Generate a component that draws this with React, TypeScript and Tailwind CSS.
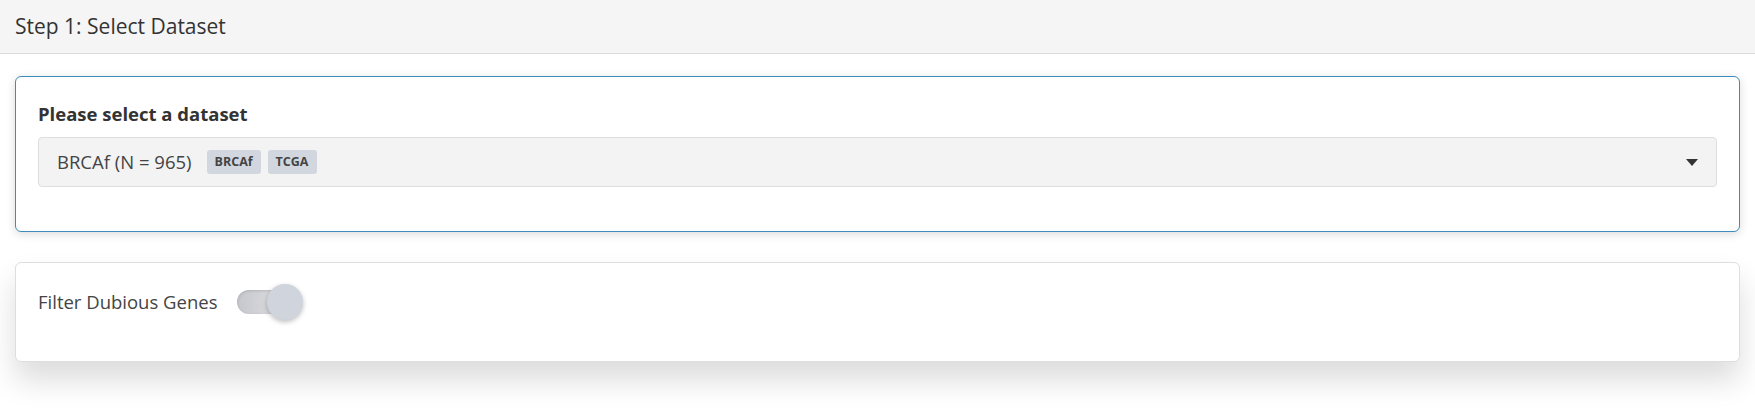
const App = () => {
  return (
    <div className="min-h-[412px] bg-white font-['Open_Sans',sans-serif] text-[#333]">
      <div className="h-[54px] bg-[#f5f5f5] border-b border-[#dcdcdc] flex items-center px-[15px]">
        <h1 className="text-[21px] text-[#333]">Step 1: Select Dataset</h1>
      </div>
      <div className="px-[15px] pt-[22px] flex flex-col gap-[30px]">
        <div className="h-[156px] border border-[#3c8dbc] rounded-[6px] bg-white shadow-[0_2px_10px_rgba(0,0,0,0.15)] px-[22px] pt-[23px]">
          <p className="text-[18.5px] font-bold text-[#333] leading-[28px]">Please select a dataset</p>
          <div className="mt-[9px] h-[50px] bg-[#f3f3f3] border border-[#dedede] rounded-[4px] flex items-center pl-[18px] pr-[18px]">
            <span className="text-[18.5px] text-[#444]">BRCAf (N = 965)</span>
            <span className="ml-[15px] h-[24px] px-[8px] rounded-[3px] bg-[#d2d6de] text-[12.5px] font-bold text-[#444] flex items-center">BRCAf</span>
            <span className="ml-[7px] h-[24px] px-[8px] rounded-[3px] bg-[#d2d6de] text-[12.5px] font-bold text-[#444] flex items-center">TCGA</span>
            <svg className="ml-auto" width="12" height="7" viewBox="0 0 12 7">
              <path d="M0 0 L12 0 L6 7 Z" fill="#333" />
            </svg>
          </div>
        </div>
        <div className="h-[100px] border border-[#dedede] rounded-[6px] bg-white shadow-[0_18px_30px_rgba(0,0,0,0.14)] px-[22px] pt-[21px]">
          <div className="flex items-center gap-[20px]">
            <span className="text-[18.5px] text-[#444]">Filter Dubious Genes</span>
            <div className="relative w-[66px] h-[36px] flex items-center">
              <div className="w-[52px] h-[24px] rounded-full bg-gradient-to-r from-[#c5c7cc] to-[#e2e3e6] shadow-[inset_0_1px_3px_rgba(0,0,0,0.15)]" />
              <div className="absolute left-[30px] top-0 w-[36px] h-[36px] rounded-full bg-[#d0d4dc] shadow-[0_2px_5px_rgba(0,0,0,0.25)]" />
            </div>
          </div>
        </div>
      </div>
    </div>
  );
};

export default App;
